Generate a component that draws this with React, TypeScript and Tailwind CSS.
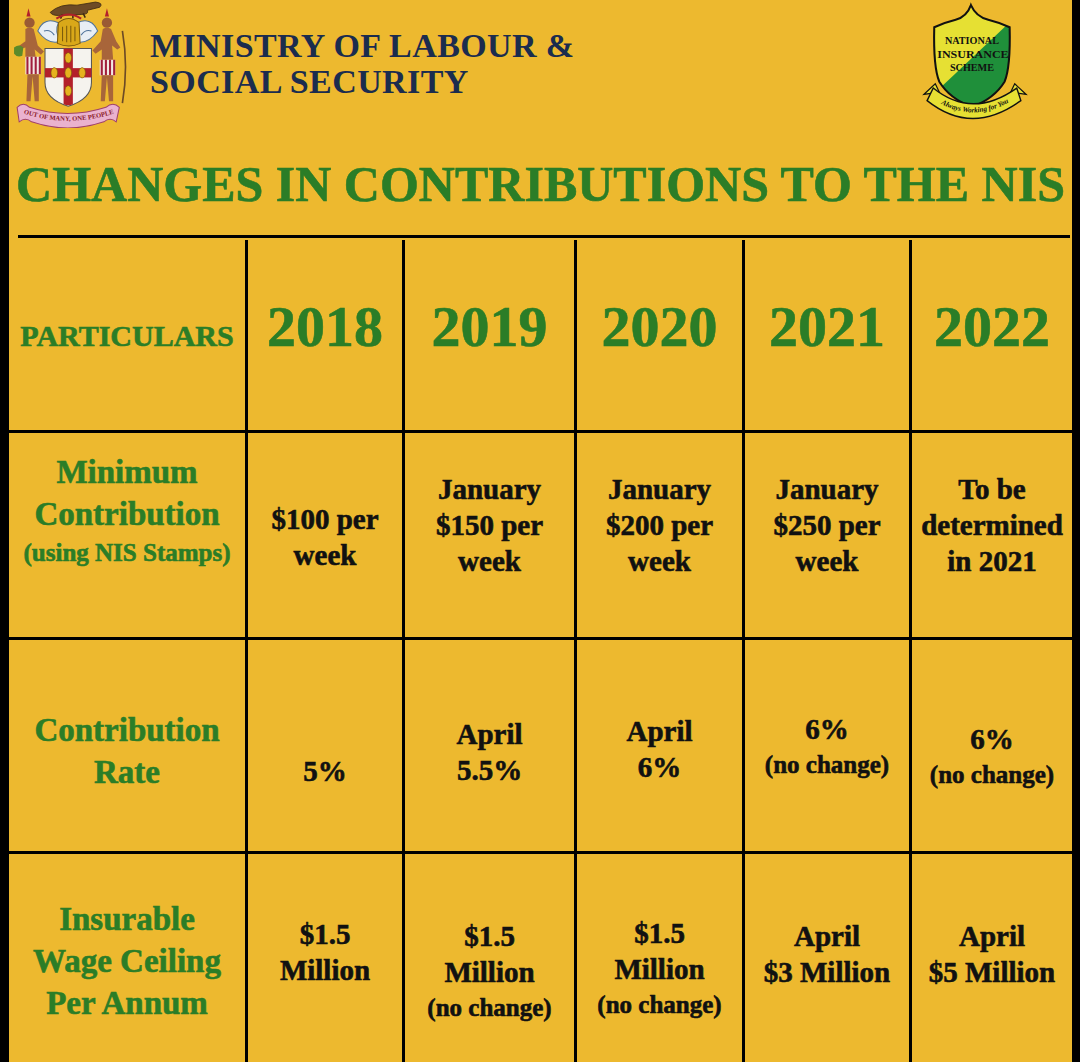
import React from "react";

const serif = "font-['Liberation_Serif','DejaVu_Serif',serif]";
const heavy = "[-webkit-text-stroke:0.6px_currentColor]";

type Line = { t: string; cls?: string };
type Cell = { lines: Line[]; shift: string };
type Row = { h: string; label: Cell; cells: Cell[] };

const L = (t: string, cls?: string): Line => ({ t, cls });

const YEARS = ["2018", "2019", "2020", "2021", "2022"];
const COLS = "grid-cols-[239px_157px_172px_168px_167px_160px]";

const ROWS: Row[] = [
  {
    h: "h-[207px]",
    label: {
      lines: [
        L("Minimum"),
        L("Contribution"),
        L("(using NIS Stamps)", "text-[25px] leading-[36px]"),
      ],
      shift: "pb-[48px]",
    },
    cells: [
      { lines: [L("$100 per"), L("week")], shift: "pt-[4px]" },
      { lines: [L("January"), L("$150 per"), L("week")], shift: "pb-[20px]" },
      { lines: [L("January"), L("$200 per"), L("week")], shift: "pb-[20px]" },
      { lines: [L("January"), L("$250 per"), L("week")], shift: "pb-[20px]" },
      { lines: [L("To be"), L("determined"), L("in 2021")], shift: "pb-[20px]" },
    ],
  },
  {
    h: "h-[214px]",
    label: { lines: [L("Contribution"), L("Rate")], shift: "pt-[10px]" },
    cells: [
      { lines: [L("5%")], shift: "pt-[50px]" },
      { lines: [L("April"), L("5.5%")], shift: "pt-[12px]" },
      { lines: [L("April"), L("6%")], shift: "pt-[6px]" },
      { lines: [L("6%"), L("(no change)", "text-[25px]")], shift: "pt-[2px]" },
      { lines: [L("6%"), L("(no change)", "text-[25px]")], shift: "pt-[22px]" },
    ],
  },
  {
    h: "h-[211px]",
    label: {
      lines: [L("Insurable"), L("Wage Ceiling"), L("Per Annum")],
      shift: "pt-[6px]",
    },
    cells: [
      { lines: [L("$1.5"), L("Million")], shift: "pb-[12px]" },
      { lines: [L("$1.5"), L("Million"), L("(no change)", "text-[25px]")], shift: "pt-[28px]" },
      { lines: [L("$1.5"), L("Million"), L("(no change)", "text-[25px]")], shift: "pt-[22px]" },
      { lines: [L("April"), L("$3 Million")], shift: "pb-[8px]" },
      { lines: [L("April"), L("$5 Million")], shift: "pb-[8px]" },
    ],
  },
];

function CoatOfArms() {
  return (
    <svg viewBox="0 0 124 124" className="w-[136px] h-[128px] shrink-0">
      {/* crocodile */}
      <path d="M36 12 Q46 3 62 5 L80 2 Q88 3 84 7 L72 10 Q74 14 66 14 L44 15 Q38 15 36 12Z" fill="#6d4b26" stroke="#3e2a12" strokeWidth="0.8" />
      <path d="M48 14 l-2 4 M58 14 l0 4 M68 13 l2 4" stroke="#3e2a12" strokeWidth="1.5" />
      {/* mantling */}
      <path d="M24 30 Q30 16 44 22 Q40 30 46 40 Q34 44 24 30Z" fill="#e8eef4" stroke="#50739a" strokeWidth="1" />
      <path d="M82 30 Q76 16 62 22 Q66 30 60 40 Q72 44 82 30Z" fill="#e8eef4" stroke="#50739a" strokeWidth="1" />
      <path d="M30 30 Q36 28 40 34 M76 30 Q70 28 66 34" stroke="#50739a" strokeWidth="1" fill="none" />
      {/* helmet */}
      <path d="M44 22 Q54 14 64 22 L65 42 Q54 47 43 42Z" fill="#d9a819" stroke="#7a5a0c" strokeWidth="1" />
      <path d="M48 26 V40 M52 25 V41 M56 25 V41 M60 26 V40" stroke="#7a5a0c" strokeWidth="1" />
      <path d="M42 18 Q54 10 66 18" stroke="#b0202a" strokeWidth="2" fill="none" />
      {/* shield */}
      <path d="M31 47 H76 V80 Q76 96 53.5 103 Q31 96 31 80Z" fill="#f5f3ee" stroke="#555" strokeWidth="1" />
      <path d="M49 47 H58 V101 Q53.5 103 49 101Z" fill="#b3202b" />
      <rect x="31" y="66" width="45" height="9" fill="#b3202b" />
      <ellipse cx="53.5" cy="56" rx="3.2" ry="5" fill="#e6b21e" stroke="#7a5a0c" strokeWidth="0.6" />
      <ellipse cx="53.5" cy="70.5" rx="3.2" ry="5" fill="#e6b21e" stroke="#7a5a0c" strokeWidth="0.6" />
      <ellipse cx="53.5" cy="88" rx="3.2" ry="5" fill="#e6b21e" stroke="#7a5a0c" strokeWidth="0.6" />
      <ellipse cx="40" cy="70.5" rx="3.2" ry="5" fill="#e6b21e" stroke="#7a5a0c" strokeWidth="0.6" />
      <ellipse cx="67" cy="70.5" rx="3.2" ry="5" fill="#e6b21e" stroke="#7a5a0c" strokeWidth="0.6" />
      {/* left figure */}
      <path d="M13 16 l2 -8 l2 8" fill="#b3202b" />
      <circle cx="16" cy="22" r="5" fill="#9a5a34" />
      <path d="M12 28 Q16 26 20 28 L24 44 L30 50 L27 53 L21 48 L22 56 L12 56 L12 46 L6 48 L5 45 L12 40Z" fill="#a8653a" />
      <path d="M1 46 Q6 42 10 46 L9 54 Q4 56 1 52Z" fill="#5c8a2a" />
      <rect x="12" y="55" width="15" height="17" fill="#f2e9e4" />
      <path d="M14 55 V72 M18 55 V72 M22 55 V72 M26 55 V72" stroke="#a01e3c" strokeWidth="2" />
      <path d="M14 72 L13 98 L17 98 L19 74 L21 98 L25 98 L25 72Z" fill="#a8653a" />
      {/* right figure */}
      <path d="M89 16 l2 -8 l2 8" fill="#b3202b" />
      <circle cx="91" cy="22" r="5" fill="#9a5a34" />
      <path d="M87 28 Q91 26 95 28 L100 40 L104 46 L101 48 L96 44 L97 58 L86 58 L86 48 L80 52 L77 49 L85 40Z" fill="#a8653a" />
      <rect x="84" y="58" width="15" height="15" fill="#f2e9e4" />
      <path d="M86 58 V73 M90 58 V73 M94 58 V73 M98 58 V73" stroke="#a01e3c" strokeWidth="2" />
      <path d="M86 73 L85 98 L89 98 L91 75 L93 98 L97 98 L97 73Z" fill="#a8653a" />
      <path d="M106 30 Q112 65 106 100" stroke="#6d4b26" strokeWidth="1.6" fill="none" />
      {/* ribbon */}
      <path d="M4 104 Q10 98 16 104 Q53 116 90 104 Q97 98 103 104 L100 118 Q94 113 88 118 Q53 130 18 118 Q12 113 6 118Z" fill="#eab2cf" stroke="#a0406a" strokeWidth="1" />
      <path id="motto" d="M10 110 Q53 124 98 110" fill="none" />
      <text fontSize="6.4" fill="#8a1a2a" fontFamily="Liberation Serif, serif" fontWeight="bold">
        <textPath href="#motto" startOffset="50%" textAnchor="middle">
          OUT OF MANY, ONE PEOPLE
        </textPath>
      </text>
    </svg>
  );
}

function NisLogo() {
  return (
    <svg viewBox="0 0 106 122" preserveAspectRatio="none" className="w-[108px] h-[128px] shrink-0">
      <defs>
        <clipPath id="shieldClip">
          <path d="M49 3 Q54 14 66 17 Q78 20 87 24 Q88 62 82 76 Q72 92 50 100 Q28 92 18 76 Q12 62 13 24 Q22 20 34 17 Q45 14 49 3Z" />
        </clipPath>
      </defs>
      <g clipPath="url(#shieldClip)">
        <rect x="0" y="0" width="106" height="122" fill="#e6e033" />
        <path d="M10 90 L95 12 L100 110 Z" fill="#1f8f3a" />
      </g>
      <path d="M49 3 Q54 14 66 17 Q78 20 87 24 Q88 62 82 76 Q72 92 50 100 Q28 92 18 76 Q12 62 13 24 Q22 20 34 17 Q45 14 49 3Z" fill="none" stroke="#111" strokeWidth="2" />
      <g fontFamily="Liberation Serif, serif" fontSize="10" fill="#111" textAnchor="middle">
        <text x="50" y="40">NATIONAL</text>
        <text x="51" y="53" textLength="70" lengthAdjust="spacingAndGlyphs">INSURANCE</text>
        <text x="50" y="66">SCHEME</text>
      </g>
      {/* ribbon */}
      <path d="M3 88 L14 78 L18 86 Z" fill="#e6e033" stroke="#111" strokeWidth="1.2" />
      <path d="M103 88 L92 78 L88 86 Z" fill="#e6e033" stroke="#111" strokeWidth="1.2" />
      <path d="M12 82 Q50 112 94 82 L98 94 Q50 128 6 94 Z" fill="#e6e033" stroke="#111" strokeWidth="1.4" />
      <path id="nisMotto" d="M10 91 Q50 120 96 90" fill="none" />
      <text fontSize="7" fontStyle="italic" fontWeight="bold" fill="#111" fontFamily="Liberation Serif, serif">
        <textPath href="#nisMotto" startOffset="50%" textAnchor="middle">
          Always Working for You
        </textPath>
      </text>
    </svg>
  );
}

function CellBox({ cell, green, last }: { cell: Cell; green?: boolean; last?: boolean }) {
  return (
    <div
      className={`flex flex-col items-center justify-center text-center whitespace-nowrap ${
        last ? "" : "border-r-[3px] border-black"
      } ${cell.shift} ${green ? "text-[#2b7d27] text-[33px] leading-[42px]" : "text-[#111] text-[29px] leading-[36px]"}`}
    >
      {cell.lines.map((l, i) => (
        <span key={i} className={l.cls ?? ""}>
          {l.t}
        </span>
      ))}
    </div>
  );
}

export default function App() {
  return (
    <div className={`w-[1080px] h-[1062px] overflow-hidden bg-black flex ${serif} font-bold`}>
      <div className="ml-[9px] w-[1063px] h-full bg-[#edb92f] flex flex-col">
        {/* Header */}
        <div className="h-[128px] flex items-start justify-between shrink-0">
          <div className="flex items-start">
            <CoatOfArms />
            <div className="ml-[5px] pt-[28px] text-[34px] leading-[36px] text-[#1b2c4e] tracking-[0.4px]">
              <div>MINISTRY OF LABOUR &amp;</div>
              <div>SOCIAL SECURITY</div>
            </div>
          </div>
          <div className="mr-[43px] mt-[2px]">
            <NisLogo />
          </div>
        </div>

        {/* Title */}
        <div className={`h-[107px] shrink-0 flex items-center justify-center pt-[6px] text-[50px] text-[#2b7d27] whitespace-nowrap ${heavy}`}>
          CHANGES IN CONTRIBUTIONS TO THE NIS
        </div>
        <div className="h-[3px] shrink-0 bg-black ml-[9px] mr-[2px]" />

        {/* Table */}
        <div className={`mt-[2px] ${heavy}`}>
          <div className={`grid ${COLS} h-[190px]`}>
            <CellBox green cell={{ lines: [L("PARTICULARS", "text-[30px]")], shift: "pt-[2px]" }} />
            {YEARS.map((y, i) => (
              <CellBox
                key={y}
                green
                last={i === YEARS.length - 1}
                cell={{ lines: [L(y, "text-[58px] leading-[60px]")], shift: "pb-[16px]" }}
              />
            ))}
          </div>
          {ROWS.map((r, ri) => (
            <div key={ri} className={`grid ${COLS} ${r.h} border-t-[3px] border-black`}>
              <CellBox green cell={r.label} />
              {r.cells.map((c, ci) => (
                <CellBox key={ci} cell={c} last={ci === r.cells.length - 1} />
              ))}
            </div>
          ))}
        </div>
      </div>
    </div>
  );
}
